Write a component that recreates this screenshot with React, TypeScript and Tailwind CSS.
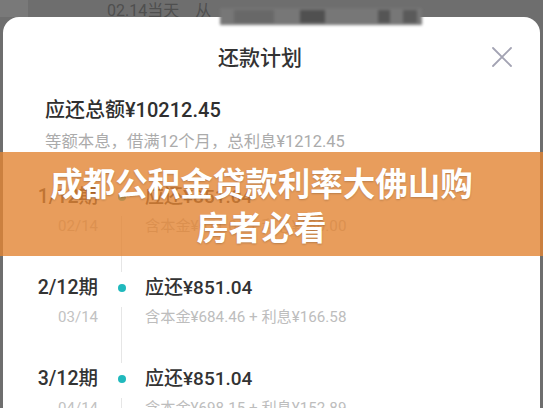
const ROWS = [
  { period: "1/12期", date: "02/14", amount: "应还¥851.04", detail: "含本金¥671.04 + 利息¥180.00" },
  { period: "2/12期", date: "03/14", amount: "应还¥851.04", detail: "含本金¥684.46 + 利息¥166.58" },
  { period: "3/12期", date: "04/14", amount: "应还¥851.04", detail: "含本金¥698.15 + 利息¥152.89" },
];

export default function App() {
  return (
    <div className="relative w-[543px] h-[408px] overflow-hidden bg-[#6e6e6e] font-['Roboto','Noto_Sans_CJK_SC',sans-serif]">
      {/* Page behind the sheet */}
      <div className="h-[17px] overflow-hidden flex">
        <div className="w-[28px] bg-[#797979]" />
        <div className="pl-[79px] pt-[1px] text-[16px] leading-[20px] text-[#4f4f4f]">02.14当天　从</div>
      </div>

      {/* Bottom sheet */}
      <div className="mx-[3px] min-h-[391px] rounded-t-[16px] bg-white">
        {/* Header */}
        <div className="h-[80px] flex items-center">
          <h1 className="ml-[215px] text-[21px] font-medium text-[#333] font-['Noto_Sans_CJK_SC',sans-serif]">还款计划</h1>
          <svg className="ml-auto mr-[28px] w-[20px] h-[20px]" viewBox="0 0 20 20" fill="none" stroke="#a3a3b3" strokeWidth="1.8" strokeLinecap="round">
            <path d="M1 1L19 19M19 1L1 19" />
          </svg>
        </div>

        {/* Summary */}
        <div className="pl-[42px]">
          <div className="text-[20px] leading-[26px] font-medium text-[#2f2f2f]">应还总额¥10212.45</div>
          <div className="mt-[9px] text-[16.4px] leading-[20px] text-[#ababab]">等额本息，借满12个月，总利息¥1212.45</div>
        </div>

        {/* Timeline */}
        <div className="mt-[33px]">
          {ROWS.map(r => (
            <div key={r.period} className="grid grid-cols-[95px_47px_1fr]">
              <div className="flex flex-col items-end">
                <span className="text-[19.5px] leading-[24px] font-medium text-[#333]">{r.period}</span>
                <span className="mt-[7px] text-[15px] leading-[20px] text-[#c2c2c2]">{r.date}</span>
              </div>
              <div className="flex flex-col items-center">
                <div className="h-[24px] flex items-center">
                  <div className="w-[8px] h-[8px] rounded-full bg-[#20b9bd]" />
                </div>
                <div className="mt-[7px] mb-[4px] w-px flex-1 bg-[#e6e6e6]" />
              </div>
              <div className="flex flex-col pb-[40px]">
                <span className="text-[19px] leading-[24px] font-medium text-[#333]">{r.amount}</span>
                <span className="mt-[7px] text-[15.2px] leading-[20px] text-[#bdbdbd]">{r.detail}</span>
              </div>
            </div>
          ))}
        </div>
      </div>

      {/* Mosaic over the top edge */}
      <div className="absolute left-[220px] top-[8px] w-[202px] h-[17px] bg-[#777] blur-[1.5px]">
        <div className="absolute left-[14px] top-[2px] w-[40px] h-[13px] bg-[#686868]" />
        <div className="absolute left-[80px] top-[2px] w-[25px] h-[13px] bg-[#505050]" />
        <div className="absolute left-[158px] top-[2px] w-[12px] h-[13px] bg-[#555]" />
        <div className="absolute left-[183px] top-[2px] w-[14px] h-[13px] bg-[#5a5a5a]" />
      </div>

      {/* Title banner */}
      <div className="absolute left-0 right-0 top-[152px] h-[104px] bg-[#e28533]/80 flex items-center justify-center pl-[46px] pr-[66px]">
        <p className="text-center text-white text-[32.5px] leading-[44px] font-bold font-['Noto_Sans_CJK_SC',sans-serif] [text-shadow:0_1px_2px_rgba(0,0,0,0.2)]">
          成都公积金贷款利率大佛山购房者必看
        </p>
      </div>
    </div>
  );
}
